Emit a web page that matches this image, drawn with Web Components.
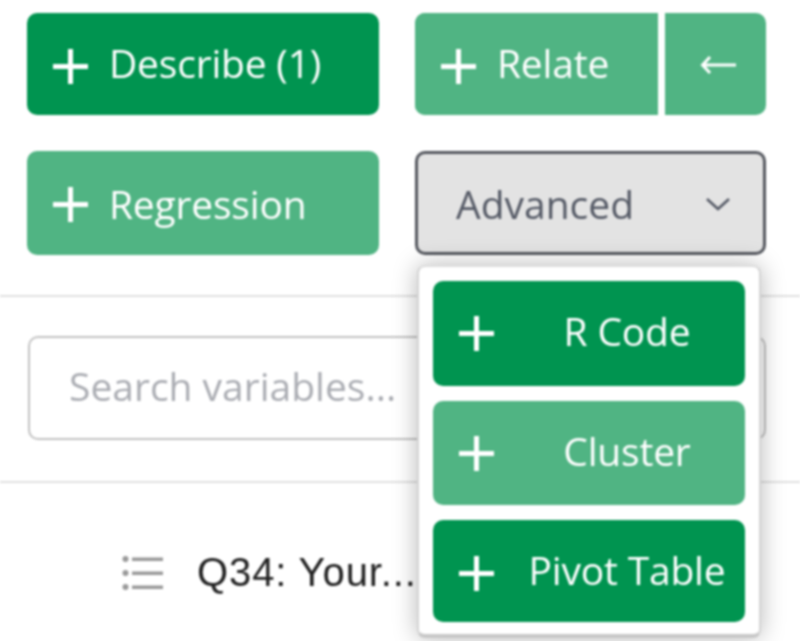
<!DOCTYPE html>
<html><head><meta charset="utf-8"><style>
html,body{margin:0;background:#fff}
body{width:800px;height:641px;overflow:hidden;font-family:"Open Sans","Noto Sans",sans-serif}
</style></head><body>
<template id="t-btn"><style>
:host{display:flex;align-items:center;box-sizing:border-box;height:var(--h,102px);background:var(--bg,#009450);color:#fff;border-radius:10px;font-size:39px;font-weight:500;padding-left:var(--pl,25px);overflow:hidden}
svg{width:37px;height:37px;flex:none;display:block;transform:translateY(var(--py,0))}
.l{margin-left:var(--gap,20px);white-space:nowrap;flex:var(--lf,0 0 auto);text-align:var(--ta,left);transform:translateY(var(--ty,0));letter-spacing:-.2px}
:host([light]){--bg:#50b483}
</style><svg viewBox="0 0 37 37"><path d="M18.500 1v35M1 18.500h35" stroke="#fff" stroke-width="5" fill="none"/></svg><span class="l"><slot></slot></span></template>

<template id="t-split"><style>
:host{display:flex;height:102px;border-radius:10px;overflow:hidden;color:#fff;background:#50b483}
.m{flex:1;display:flex}
x-btn{flex:1;border-radius:0;--py:2px;--ty:-2px}
.d{width:7px;background:#fff}
.a{width:101px;display:flex;align-items:center;justify-content:center}
svg{width:36px;height:20px;display:block;margin-left:4px;margin-top:1px}
</style><div class="m"><x-btn light><slot></slot></x-btn></div><div class="d"></div><div class="a"><svg viewBox="0 0 36 20"><path d="M36 10H3M10 2 2.500 10 10 18" stroke="#fff" stroke-width="3" fill="none"/></svg></div></template>

<template id="t-dd"><style>
:host{display:flex;align-items:center;justify-content:space-between;box-sizing:border-box;height:104px;background:#e3e3e3;border:3px solid #55585f;border-radius:10px;color:#555a66;font-size:39px;padding:0 32px 0 38px}
svg{width:26px;height:14px;display:block;margin-top:2px}
</style><span><slot></slot></span><svg viewBox="0 0 26 14"><path d="M2 2 13 12 24 2" stroke="#555a66" stroke-width="2.600" fill="none"/></svg></template>

<template id="t-search"><style>
:host{display:flex;align-items:center;box-sizing:border-box;height:104px;border:2.500px solid #c2c2c2;border-radius:10px;margin:0 34px 0 28px;padding-left:39px;color:#abadb3;font-size:39px}
span{transform:translateY(-3px)}
</style><span><slot></slot></span></template>

<template id="t-row"><style>
:host{display:flex;align-items:center;padding-left:122px;font:40px "Liberation Sans",Arial,sans-serif;color:#222;letter-spacing:.9px}
svg{width:41px;height:36px;display:block;margin-right:34px;flex:none}
span{white-space:nowrap}
</style><svg viewBox="0 0 41 36"><g fill="#999"><circle cx="3.500" cy="4" r="3"/><circle cx="3.500" cy="18" r="3"/><circle cx="3.500" cy="32" r="3"/><rect x="10" y="2.500" width="31" height="3.500"/><rect x="10" y="16.500" width="31" height="3.500"/><rect x="10" y="30.500" width="31" height="3.500"/></g></svg><span><slot></slot></span></template>

<template id="t-menu"><style>
:host{position:absolute;left:417px;top:265px;width:344px;height:373px;box-sizing:border-box;background:#fff;border:2px solid #d5d5d5;border-top-color:#ddd;border-bottom:4px solid #c8c8c8;border-radius:8px;padding:14px 14px 0;display:flex;flex-direction:column;gap:15px;box-shadow:0 0 24px rgba(0,0,0,.28)}
::slotted(x-btn){--gap:14px;--lf:1 1 auto;--ta:center}
</style><slot></slot></template>

<template id="t-app"><style>
:host{display:block;position:relative;width:800px;height:641px;filter:blur(.85px);color:#fff}
.g{display:grid;grid-template-columns:352px 351px;column-gap:36px;row-gap:36px;padding:13px 0 0 27px}
.s1{height:2px;background:#e0e0e0;margin-top:40px}
.sr{padding-top:39px}
.s2{height:2px;background:#e0e0e0;margin-top:41px}
.r{padding-top:67px}
x-dd{margin-left:1px}
</style>
<div class="g"><slot name="g"></slot></div>
<div class="s1"></div>
<div class="sr"><slot name="s"></slot></div>
<div class="s2"></div>
<div class="r"><slot name="r"></slot></div>
<slot name="m"></slot></template>

<script>
const def=(n,id)=>customElements.define(n,class extends HTMLElement{constructor(){super();this.attachShadow({mode:'open'}).appendChild(document.getElementById(id).content.cloneNode(true))}});
def('x-btn','t-btn');def('x-split','t-split');def('x-dd','t-dd');def('x-search','t-search');def('x-row','t-row');def('x-menu','t-menu');def('x-app','t-app');
</script>
<x-app>
<x-btn slot="g" style="--py:2px;--ty:-2px">Describe (1)</x-btn>
<x-split slot="g">Relate</x-split>
<x-btn slot="g" light style="--h:104px;--py:1px">Regression</x-btn>
<x-dd slot="g">Advanced</x-dd>
<x-search slot="s">Search variables...</x-search>
<x-row slot="r">Q34: Your...</x-row>
<x-menu slot="m">
<x-btn style="--h:105px;--ty:-3px">R Code</x-btn>
<x-btn light style="--h:104px;--ty:-3px">Cluster</x-btn>
<x-btn style="--h:102px;--py:2px;--ty:-2px">Pivot Table</x-btn>
</x-menu>
</x-app>
</body></html>
